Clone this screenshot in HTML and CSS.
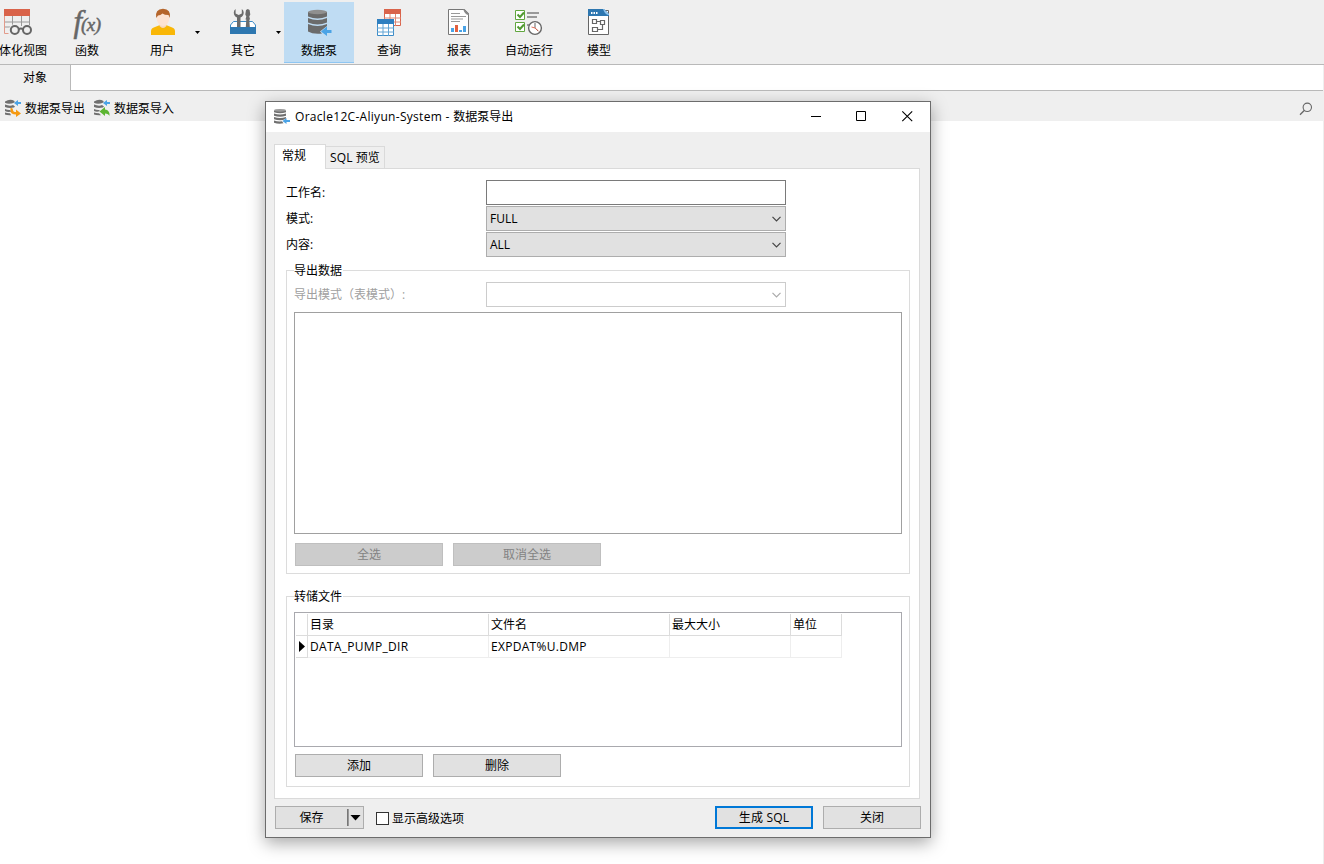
FILE: index.html
```html
<!DOCTYPE html>
<html lang="zh-CN">
<head>
<meta charset="utf-8">
<title>数据泵导出</title>
<link rel="stylesheet" href="styles.css">
</head>
<body>
<div class="app">
  <nav class="toolbar">
    <div class="tool tool-first">
      <svg width="32" height="32" viewBox="2 6 32 32"><path d="M4 9h26v7H4z" fill="#d9634a"/><path d="M4.500 22h25M4.500 27h7M12.500 16v10M21.500 16v10M29.500 16v10" fill="none" stroke="#999"/><path d="M4.500 16v17.500h4" fill="none" stroke="#e29a8a"/><circle cx="15" cy="30" r="6" fill="#efefef"/><circle cx="27" cy="30" r="5.500" fill="#efefef"/><g fill="none" stroke="#666" stroke-width="2"><circle cx="14.800" cy="30" r="4"/><circle cx="27" cy="30" r="4"/><path d="M18.600 29.500q2.300-2 4.600 0"/></g></svg>
      <span>体化视图</span>
    </div>
    <div class="tool">
      <span class="fx"><i>f</i><i class="fx-arg">(x)</i></span>
      <span>函数</span>
    </div>
    <div class="tool tool-user">
      <svg width="32" height="32" viewBox="145 6 32 32"><path d="M150 35v-4q0-3 4-4l5-2h6l5 2q4 1 4 4v4z" fill="#f9b707"/><path d="M158.500 23h7v3q-3.500 4-7 0z" fill="#f6d9c4"/><ellipse cx="162" cy="18.500" rx="6.300" ry="7.500" fill="#fde3d3"/><path d="M155.200 18q-1.500-9 6.800-9.200 8.300.2 6.800 9.200l-1.300-3q-4 0-6-1.500-2 2-4.500 2z" fill="#b5652b"/></svg>
      <span>用户</span>
    </div>
    <i class="drop"></i>
    <div class="tool tool-other">
      <svg width="32" height="32" viewBox="227 6 32 32"><path d="M230.500 27v-2l3-3.500h19l3 3.500v2" fill="#fff" stroke="#3b8bc7"/><path d="M237 27V17.500q-3.200-1.500-3.200-5 0-2.200 1.800-3.500v4.500l3.100 1.500 3.100-1.500V9q1.900 1.300 1.900 3.500 0 3.500-3.200 5V27zM245.800 27l.5-7.500h-.8l.8-3-1-2 .7-4.500 1.800-1 1.800 1 .7 4.500-1 2 .8 3h-.8l.5 7.500z" fill="#6b6b6b"/><path d="M230 27h26v7h-26z" fill="#2e77b0"/></svg>
      <span>其它</span>
    </div>
    <i class="drop"></i>
    <div class="tool tool-active">
      <svg width="32" height="32" viewBox="303 6 32 32"><g fill="#6b6b6b"><path d="M308 12v4.500q9.500 4 19 0V12z"/><path d="M308 18q9.500 4 19 0v4.500q-9.500 4-19 0z"/><path d="M308 24q9.500 4 19 0v2l-7 5.500 2 2q-9 1-14-2z"/></g><ellipse cx="317.500" cy="12" rx="9.500" ry="2.200" fill="#8f8f8f"/><path d="M321 31.500l6-5v3.500h4.500v3H327v3z" fill="#4aa3e6"/></svg>
      <span>数据泵</span>
    </div>
    <div class="tool">
      <svg width="32" height="32" viewBox="373 6 32 32"><path d="M384.500 9.500h16v16h-16z" fill="#fff" stroke="#d9634a"/><path d="M384 9h17v5h-17z" fill="#d9634a"/><path d="M390 14v12M395.500 14v12M384 18h17M384 22h17" stroke="#de8875"/><path d="M377.500 19.500h16v16h-16z" fill="#fff" stroke="#3b8bc7"/><path d="M377 19h17v5h-17z" fill="#2e7fc0"/><path d="M383 24v12M388.500 24v12M377 28h17M377 32h17" stroke="#62a4d4"/></svg>
      <span>查询</span>
    </div>
    <div class="tool">
      <svg width="32" height="32" viewBox="443 6 32 32"><path d="M448.500 9.500h16l4 4v21h-20z" fill="#fff" stroke="#777"/><path d="M463 9h1.500l4.500 4.500V15q-4 0-6-6" fill="#888"/><path d="M451 13.500h9M451 16.500h15M451 19h12M451 21.500h9" stroke="#999"/><path d="M451 28h3v4h-3zM463 26h3v6h-3z" fill="#4aa3e6"/><path d="M455 25h3v7h-3z" fill="#e2603f"/><path d="M459 30h3v2h-3z" fill="#4aa3e6"/></svg>
      <span>报表</span>
    </div>
    <div class="tool">
      <svg width="32" height="32" viewBox="513 6 32 32"><path d="M515.500 10.500h9v9h-9zM515.500 22.500h9v9h-9z" fill="#fff" stroke="#61a63f"/><path d="M517.500 14.500l2.500 2.500 4-4.500M517.500 26.500l2.500 2.500 4-4.500" fill="none" stroke="#519a31" stroke-width="2"/><path d="M527 13h12M527 17h10M527 25h4" stroke="#999" stroke-width="2"/><circle cx="535" cy="28" r="6.400" fill="#fff" stroke="#666" stroke-width="1.400"/><path d="M535 23v5l3 3" fill="none" stroke="#666"/><path d="M531.500 27l3.500 1 3.500 3" fill="none" stroke="#e2705a"/></svg>
      <span>自动运行</span>
    </div>
    <div class="tool">
      <svg width="32" height="32" viewBox="583 6 32 32"><path d="M588.500 10.500h20v24h-20z" fill="#fff" stroke="#666"/><path d="M588 9h16l5 5v2h-21z" fill="#2e77b0"/><path d="M603 9h1l5 5v1q-4 0-6-6" fill="#8dc1eb"/><path d="M591 12h1.500v2H591zM593.500 12h1.500v2h-1.500zM596 12h1.500v2H596z" fill="#fff"/><path d="M592.500 19.500h4v4h-4zM600.500 20.500h4v4h-4zM592.500 27.500h5v4h-5zM596.500 21.500h4M602.500 24.500v5h-5" fill="none" stroke="#666" stroke-width="1.200"/></svg>
      <span>模型</span>
    </div>
  </nav>
  <div class="tabrow"><div class="tab-object">对象</div><div class="tab-rest"></div></div>
  <div class="actions">
    <div class="action">
      <svg width="18" height="18" viewBox="0 0 18 18"><g fill="#6f6f6f"><path d="M1 2.500q5-3 9.500-.5v1.500Q5 6 1 3.800zM1 5.500q5 2 8 .5l2 1.500-1 1Q5 9.500 1 8zM1 10q3 1.300 5 1l1.500 1.500Q4 13.500 1 12zM1 13.500q2.500 1 5 .8l1 2Q3 16.500 1 15.500z"/></g><path d="M10 4l4-3v2h3v2h-3v2z" fill="#4aa3e6"/><path d="M6.500 9q2.500-.5 2.500 2 0 2 3 2v-2.500l5 4-5 3.500v-2.500q-5.500 0-5.500-4z" fill="#f59a12"/></svg>
      <span>数据泵导出</span>
    </div>
    <div class="action">
      <svg width="18" height="18" viewBox="0 0 18 18"><g fill="#6f6f6f"><path d="M1 2.500q5-3 9.500-.5v1.500Q5 6 1 3.800zM1 5.500q5 2 8 .5l2 1.500-1 1Q5 9.500 1 8zM1 10q3 1.300 5 1l1 1Q4 13.500 1 12zM1 13.500q2.500 1 5 .8l2 2Q3 16.500 1 15.500z"/></g><path d="M10 4l4-3v2h3v2h-3v2z" fill="#4aa3e6"/><path d="M6.500 12.500L12 8v2.500q5 .5 4.500 6.500-1-2.500-4.500-2.500V17z" fill="#5cb531"/></svg>
      <span>数据泵导入</span>
    </div>
    <svg class="search" width="14" height="14" viewBox="0 0 14 14"><circle cx="8.300" cy="5.300" r="4.200" fill="none" stroke="#666" stroke-width="1.100"/><path d="M5.200 8.500L1 12.700" stroke="#666" stroke-width="1.300"/></svg>
  </div>
  <main class="canvas"></main>
</div>

<section class="dialog">
  <header class="titlebar">
    <svg width="18" height="18" viewBox="0 0 18 18"><g fill="#6f6f6f"><path d="M1 2.500v1.800q6 2 12 0V2.500zM1 5.500q6 2 12 0v2.300q-6 2-12 0zM1 9q6 2 12 0v1.500L10 12q-5 .5-9-.7zM1 12.500q4 1.300 8 .8l1.500 2q-5 1-9.500-.6z"/></g><ellipse cx="7" cy="2.300" rx="6" ry="1.400" fill="#999"/><path d="M9.500 13l4-3v2H17v2h-3.500v2z" fill="#4aa3e6"/></svg>
    <span class="caption"><span class="lat">Oracle12C-Aliyun-System - </span>数据泵导出</span>
    <svg class="winbtns" width="114" height="30" viewBox="0 0 114 30" fill="none" stroke="#000"><path d="M6 14.500h10"/><path d="M51.500 9.500h9v9h-9z"/><path d="M97.300 9.300l9.900 9.900M107.200 9.300l-9.900 9.900" stroke-width="1.100"/></svg>
  </header>
  <div class="tabs"><div class="tab tab-on">常规</div><div class="tab tab-off">SQL 预览</div></div>
  <div class="page">
    <div class="row"><label>工作名:</label><div class="field"></div></div>
    <div class="row"><label>模式:</label><div class="field combo"><span>FULL</span><svg width="9" height="6" viewBox="0 0 9 6"><path d="M.5.800l4 4 4-4" fill="none" stroke="#444" stroke-width="1.200"/></svg></div></div>
    <div class="row"><label>内容:</label><div class="field combo"><span>ALL</span><svg width="9" height="6" viewBox="0 0 9 6"><path d="M.5.800l4 4 4-4" fill="none" stroke="#444" stroke-width="1.200"/></svg></div></div>
    <div class="group group-data">
      <div class="legend"><span>导出数据</span></div>
      <div class="row row-off"><label>导出模式（表模式）:</label><div class="field combo"><span></span><svg width="9" height="6" viewBox="0 0 9 6"><path d="M.5.800l4 4 4-4" fill="none" stroke="#aaa" stroke-width="1.200"/></svg></div></div>
      <div class="list"></div>
      <div class="buttons"><div class="btn btn-off">全选</div><div class="btn btn-off">取消全选</div></div>
    </div>
    <div class="group group-files">
      <div class="legend"><span>转储文件</span></div>
      <div class="grid">
        <div class="line head"><div></div><div>目录</div><div>文件名</div><div>最大大小</div><div>单位</div></div>
        <div class="line values"><div><i class="marker"></i></div><div>DATA_PUMP_DIR</div><div>EXPDAT%U.DMP</div><div></div><div></div></div>
      </div>
      <div class="buttons"><div class="btn btn-mid">添加</div><div class="btn btn-mid">删除</div></div>
    </div>
  </div>
  <footer class="footer">
    <div class="btn save"><span>保存</span><i class="split"></i><i class="arrow"></i></div>
    <div class="check"><i class="box"></i><span>显示高级选项</span></div>
    <div class="btn primary">生成 SQL</div>
    <div class="btn close">关闭</div>
  </footer>
</section>
</body>
</html>
```
FILE: styles.css
```css
* { box-sizing: border-box; }
body {
  margin: 0;
  width: 1324px;
  height: 864px;
  overflow: hidden;
  position: relative;
  background: #fff;
  color: #000;
  font: 12px/16px "Open Sans", "Noto Sans CJK SC", sans-serif;
  white-space: nowrap;
}
svg { display: block; flex: none; }
.app { display: flex; flex-direction: column; height: 864px; }

.toolbar { display: flex; height: 65px; background: #efefef; border-bottom: 1px solid #b9b9b9; }
.tool { width: 70px; height: 62px; margin-top: 2px; padding-top: 4px; display: flex; flex-direction: column; align-items: center; gap: 5px; flex: none; }
.tool-first { width: 52px; align-items: flex-end; padding-right: 5px; }
.tool-first svg { margin-right: 13px; }
.tool-user { margin-left: 5px; }
.tool-other { margin-left: 8px; }
.tool-active { background: #bfdcf3; border-bottom: 1px solid #8fc6f2; height: 61px; margin-left: 3px; }
.drop { width: 5px; height: 3px; margin: 31px 0 0 -2px; background: #000; clip-path: polygon(0 0, 100% 0, 50% 100%); }
.fx { height: 32px; display: flex; font-family: "Liberation Serif", serif; color: #666; font-size: 31px; line-height: 31px; -webkit-text-stroke: .5px #666; }
.fx-arg { font-size: 19px; line-height: 38px; margin-left: -1px; letter-spacing: -.5px; }

.tabrow { display: flex; height: 26px; background: #efefef; }
.tab-object { width: 70px; text-align: center; line-height: 26px; }
.tab-rest { flex: 1; margin-right: 1px; background: #fff; border-left: 1px solid #b9b9b9; border-bottom: 1px solid #b9b9b9; }
.actions { display: flex; align-items: center; gap: 8px; height: 30px; padding: 4px 11px 0 4px; background: #efefef; }
.action { display: flex; align-items: center; gap: 3px; }
.action span { padding-top: 2px; }
.search { margin-left: auto; margin-top: 1px; }
.canvas { flex: 1; border-right: 1px solid #eee; }

.dialog {
  position: absolute; left: 265px; top: 101px; width: 666px; height: 737px;
  display: flex; flex-direction: column;
  background: #efefef; border: 1px solid #6c6c6c;
  box-shadow: 0 5px 16px rgba(0,0,0,.35);
}
.titlebar { height: 30px; background: #fff; display: flex; align-items: center; padding-left: 7px; }
.caption { margin-left: 4px; }
.lat { letter-spacing: .3px; }
.winbtns { margin-left: auto; margin-right: 11px; }
.tabs { display: flex; align-items: flex-end; height: 37px; padding: 12px 0 0 8px; margin-bottom: -1px; z-index: 1; }
.tab { border: 1px solid #dadada; border-bottom: 0; }
.tab-on { width: 52px; height: 25px; background: #fff; padding: 3px 0 0 7px; }
.tab-off { width: 59px; height: 23px; border-left: 0; border-bottom: 1px solid #dadada; text-align: center; padding-top: 3px; letter-spacing: .1px; }
.page { width: 646px; height: 631px; margin-left: 8px; background: #fff; border: 1px solid #dadada; padding: 11px 9px 0 11px; }
.row { display: flex; align-items: center; height: 26px; padding-bottom: 1px; }
.row label { width: 200px; }
.field { width: 300px; height: 25px; border: 1px solid #7a7a7a; background: #fff; }
.combo { display: flex; align-items: center; justify-content: space-between; padding: 0 4px 0 3px; background: #e1e1e1; border-color: #adadad; }
.group { border: 1px solid #dcdcdc; padding: 0 7px; }
.group-data { height: 304px; margin-top: 12px; }
.group-files { height: 191px; margin-top: 22px; }
.legend { width: 49px; height: 17px; margin: -9px 0 -1px; padding-top: 1px; background: #fff; }
.row-off { height: 30px; padding: 0 0 5px; margin-top: 4px; color: #a0a0a0; }
.row-off label { width: 192px; }
.row-off .combo { background: #fff; border-color: #ccc; }
.list { width: 608px; height: 222px; border: 1px solid #a0a0a0; }
.buttons { display: flex; gap: 10px; padding: 9px 0 0 1px; }
.btn { height: 23px; width: 148px; border: 1px solid #adadad; background: #e1e1e1; text-align: center; line-height: 21px; }
.btn-off { background: #ccc; border-color: #bfbfbf; color: #838383; }
.btn-mid { width: 128px; }
.group-files .buttons { padding-top: 7px; }
.grid { width: 608px; height: 135px; margin-top: 8px; padding: 1px; border: 1px solid #a9a9ae; }
.line { display: grid; grid-template-columns: 12px 181px 181px 121px 51px; height: 22px; }
.line div { border-right: 1px solid #eee; border-bottom: 1px solid #eee; padding-left: 2px; line-height: 21px; }
.line div:first-child { padding: 5px 0 0 3px; border-color: #dcdcdc; }
.head div { border-color: #dcdcdc; }
.values { letter-spacing: .3px; }
.marker { display: block; width: 6px; height: 11px; background: #000; clip-path: polygon(0 0, 100% 50%, 0 100%); }
.footer { display: flex; padding: 7px 0 0 9px; }
.save { width: 89px; display: flex; align-items: center; }
.save span { width: 71px; }
.split { width: 2px; height: 17px; border-left: 1px solid #777; border-right: 1px solid #999; }
.arrow { width: 11px; height: 6px; margin-left: 1px; background: #000; clip-path: polygon(0 0, 100% 0, 50% 100%); }
.check { display: flex; align-items: center; gap: 3px; margin-left: 12px; height: 24px; }
.check span { padding-top: 2px; }
.box { width: 13px; height: 13px; background: #fff; border: 1px solid #333; }
.primary { width: 98px; margin-left: auto; border: 2px solid #0078d7; line-height: 19px; letter-spacing: .2px; }
.close { width: 98px; margin: 0 9px 0 10px; }
```
